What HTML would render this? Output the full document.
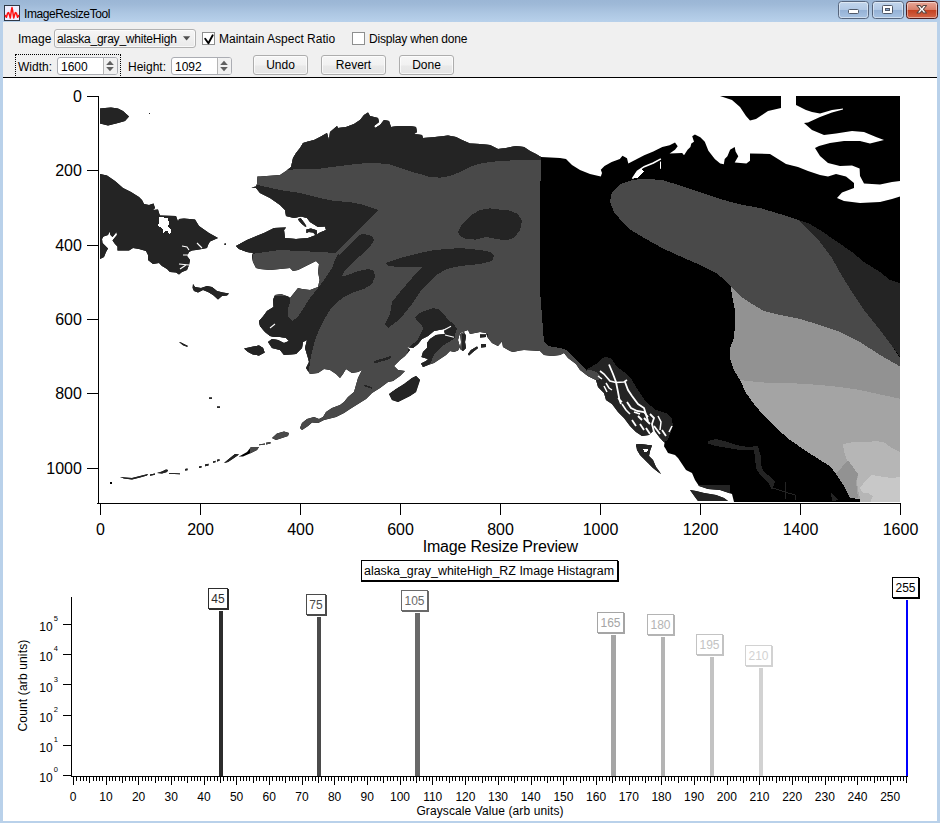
<!DOCTYPE html>
<html>
<head>
<meta charset="utf-8">
<title>ImageResizeTool</title>
<style>
html,body{margin:0;padding:0;}
body{width:940px;height:823px;overflow:hidden;position:relative;background:#b9d1ea;font-family:"Liberation Sans",sans-serif;}
.abs{position:absolute;}
#titlebar{left:0;top:0;width:940px;height:22px;background:linear-gradient(#9bb6d5 0px,#9eb9d7 4px,#abc5e1 12px,#b8d1eb 22px);}
#frame{left:0;top:22px;width:940px;height:801px;background:#b9d1ea;}
#client{left:3px;top:22px;width:934px;height:799px;background:#fff;}
#ctrlbar{left:3px;top:22px;width:934px;height:55px;background:#f0f0f0;}
#ctrlline{left:3px;top:77px;width:934px;height:1px;background:#000;}
.ui{font-family:"Liberation Sans",sans-serif;font-size:12px;color:#000;white-space:nowrap;line-height:14px;}
.btn{border:1px solid #adadad;border-radius:3px;background:linear-gradient(#f6f6f6,#f1f1f1 50%,#e9e9e9 55%,#e5e5e5);box-shadow:inset 0 0 0 1px rgba(255,255,255,0.7);box-sizing:border-box;text-align:center;}
.field{border:1px solid #abadb3;border-radius:3px;background:#fff;box-sizing:border-box;}
svg{position:absolute;left:0;top:0;}
svg text{font-family:"Liberation Sans",sans-serif;}
</style>
</head>
<body>
<div id="titlebar" class="abs"></div>
<div id="frame" class="abs"></div>
<div id="client" class="abs"></div>
<div id="ctrlbar" class="abs"></div>
<div id="ctrlline" class="abs"></div>

<!-- title -->
<div class="abs ui" id="title" style="left:24px;top:7px;letter-spacing:-0.4px;">ImageResizeTool</div>

<!-- controls row 1 -->
<div class="abs ui" id="lblImage" style="left:18px;top:32px;">Image</div>
<div class="abs btn" id="dropdown" style="left:54px;top:29px;width:142px;height:19px;background:linear-gradient(#f6f6f6,#f0f0f0 50%,#e9e9e9);border-color:#b2b2b2;"></div>
<div class="abs ui" id="ddtext" style="left:57px;top:32px;letter-spacing:-0.21px;">alaska_gray_whiteHigh</div>
<div class="abs field" id="cb1" style="left:202px;top:32px;width:13px;height:13px;border-radius:0;border-color:#8e8f8f;"></div>
<div class="abs ui" id="lblMaintain" style="left:219px;top:32px;">Maintain Aspect Ratio</div>
<div class="abs field" id="cb2" style="left:352px;top:32px;width:13px;height:13px;border-radius:0;border-color:#8e8f8f;"></div>
<div class="abs ui" id="lblDisplay" style="left:369px;top:32px;letter-spacing:-0.18px;">Display when done</div>

<!-- controls row 2 -->
<div class="abs" id="focusrect" style="left:15px;top:54px;width:106px;height:24px;border:1px dotted #000;border-bottom:none;box-sizing:border-box;"></div>
<div class="abs ui" id="lblWidth" style="left:18px;top:60px;">Width:</div>
<div class="abs field" id="wfield" style="left:57px;top:57px;width:61px;height:18px;"></div>
<div class="abs ui" id="wval" style="left:61px;top:60px;">1600</div>
<div class="abs ui" id="lblHeight" style="left:128px;top:60px;">Height:</div>
<div class="abs field" id="hfield" style="left:171px;top:57px;width:61px;height:18px;"></div>
<div class="abs ui" id="hval" style="left:175px;top:60px;">1092</div>
<div class="abs btn ui" id="bUndo" style="left:253px;top:55px;width:55px;height:20px;line-height:19px;">Undo</div>
<div class="abs btn ui" id="bRevert" style="left:321px;top:55px;width:65px;height:20px;line-height:19px;">Revert</div>
<div class="abs btn ui" id="bDone" style="left:399px;top:55px;width:55px;height:20px;line-height:19px;">Done</div>

<svg id="main" width="940" height="823" viewBox="0 0 940 823">
<defs><clipPath id="land"><path d="M100 108.4L105 108L111 107.4L118 108.4L123 111L129 116.6L125 121L118 123L108 125.6L100 123.6Z M100 174L107 175.6L115 181L123 188L131 192L139 197L142 200L144 204L149 205L153.5 203.5L155 208L153 210L158 209.5L159 213L160 215.5L176 216L178 221.5L179 219L184 218.5L195 219.6L199 226L209 233L218 238L210 241.5L208 245L207 248L202 249L196 250L192 250.5L189 252L187 256L190 260L189 265L187 270L182 272L179 274.5L176 272.5L170 272L167 269L162 266L159 263L153 264L148 260L148 255L146 251L139 249L133 248L129 250.5L117.5 250.5L117.5 246.5L115 244L112.5 240.5L114.5 238L117 235L116.5 232L112.5 237L110.5 235L109.5 231.5L108 235L103.5 236.5L102 239L102.5 243L105 245.5L108 248.5L106 252L104 257L100 259Z M193 284L195 287L201 288L207 286L212 287L217 291L223 292.4L229 293.6L227 295.6L222 296L218 299.6L213 295L208 292L203 290L198 292.4L194 291L192.6 288Z M244 348.4L251 347L259 345.4L263 348L264.6 352.4L259 355.6L253 354.4L248 352Z M179 342L181 342.4L188 346L187 346.8L183 345.2Z M251.5 187.6L256 186.4L257 184L257.4 176.4L260 176.4L280 175L286 171L291 167L293 158L296 153L300 148L303 143L308 141.6L314 140L320 137L327 133L329 140L330 132L337 126L338 128L346 127L354 124L360 120L364 115L368 112.4L370 116L378 118L379 122L374 126L375 128L380 125L384 120L389 121L391 127L398 126L410 126L416 127L417 132L414 134L422 135L423 138L430 137.6L440 136.4L448 135.6L456 137L462 140L470 143.6L480 144L490 145L498 149L506 148L516 146L524 147L530 151L536 154L541 157L560 158L566 159L572 165L580 170L590 174L600.8 176.4L602 173L600.8 169.7L604.5 166.1L611.7 162L619.8 158.9L622.5 155.8L627 158.3L628.3 163.4L637 158.9L644.2 155.3L653.3 151.6L662.3 147.1L669.6 145.3L675 142.6L677.7 146.2L675 149.8L669.6 153.5L682.2 153.1L684 155.3L687.6 149.8L690.4 147.1L691.3 143.5L694 141.7L692.2 136.3L694.9 134.5L700.3 137.2L704.8 141.7L708.4 150.7L714.8 158.9L720.2 163.4L723.8 164.3L724.7 158.9L727.4 156.2L730.1 149.8L734.7 147.1L735.6 151.6L738.3 156.2L734.7 162.5L746.4 163.4L750 160.7L750 153.5L770 154L778 159L786 164L798 167L808 171L820 175L828 176.4L836 174L846 176.4L854 183L854 188L842 192.4L837 198L844 201L860 203L880 202L892 199L900 196.4L900 502L734 502L732 494L720 490L708 489L699 486L695 480L692 473L686 470L682 464L678 458L675 455L668 453L664 446L666 438L670 434L666 444L660 438L654 430L649 435L642 436L636 432L630 426L624 418L618 412L612 404L606 400L604 393L598 387L596 380L588 376L580 370L576 364L568 358L564 353L560 355L552 356L544 355L540 351L532 350.6L524 350L520 350.5L513 352L510 351L503 347L502 341.5L498 346L492 343L488 338L486 333L480 332L470 334L468 330L460 333L458 340L460 347L458 350.5L454 352L450 351L446 355L440 359L434 363L428 365L423 367L421 363.5L426 361L431 356.5L428 359L421.5 357L423 352L427 348L427 343L430 339L436 335L445 334L444 330L450 326.5L444 329L434 331L428 336L422 339L418 344L413 348L407 347L410 350L405 356L400 360L394 366L398 370L405 371L400 376L393 381L388 382L380 388L372 393L366 399L358 404L350 409L344 413L336 417L328 419L324 420L318 423L312 422.4L308 426L302 430L300 428L302 423L307 419L314 417L319 419L323 417L326 412L332 408L340 405L344 402L348 397L354 392L356 385L358 378L362 370L358 372L352 373L346 369L343 374L340 378L336 374L330 370L324 369L318 373L310 374L306 368L309 362L308 358L305 348L307 340L303 342L302 348L296 354L284 355L280 350L272 348L268 342L272 339L278 340L284 343L289 341L286 338L280 337L274 337L270 336L265 332L260 326L259 321L263 316.5L267 311L273.5 307L273 300L275 295L281 294L288 296.5L290 298L298 288L302 289L310 290L318 287L319.6 280L318 272L319 264L316 261L308 265L298 270L293 271L290 268L280 269L270 270L260 269L256 268L253 262L252 256L253 253L247 252L239 249L236 246L247 240L259 235L264 233L274 228L286 227.6L284 230L285 238L296 239L308 238L316 235L320 232.4L326 230L325 226.4L318 227L310 222L307 218L301 216.4L294 218L286 216L285 210L280 205L270 198L260 193L256 188Z M389 394L396 389L404 384L412 378L416 376L420 380L418 386L416 392L410 396L404 399L398 402L392 400Z M272 438L277 433.6L284 431.6L289 433L288 436L282 438L276 440Z M636 444.4L640 444L652 445.5L650 451L649 456L653 460L656 467L659 471L661 474L658 472L653 468L648 463L643 458L640 455L637 450Z M690 490L696 491L704 493L716 495L724 498L728 501L698 501L695 497Z M720 96L732 100L740 107L746 116L750 120.4L756 119L762 115L768 111L781 108L781 96Z M796 96L900 96L900 181L892 182L880 184.4L864 183.6L860 176L859.6 168.4L852 165.6L840 166L828 163L820 156L815 148L819 146L830 143L844 141L860 141L870 143.6L878 141.6L884 140L876 137L864 132L852 131L836 133.6L824 135L812 130L804 123L808 122.6L820 117L832 112.6L843 109.6L843 108.6L832 110L820 113.6L812 112L806 110L800 107L796 105Z M298 218.9L300.8 218.3L304.2 222.8L306.4 226.2L305.3 226.8L301.9 224L299.1 221.1Z M306.4 229.6L310.9 228.5L316.6 230.2L317.1 233L316 235.8L313.2 232.4L308.7 231.9L306.4 233Z M209 397.5L212 397.5L212 398.8L209 398.8Z M217 406.5L220 406.5L220 407.8L217 407.8Z M149 113L150 113L150 114L149 114Z M224.5 243.5L226 243.5L226 245L224.5 245Z M460 334L464 332L466 336L465 342L466 348L463 351L460 349L461 342Z M468 354L471 350L477 346.5L478 348L473 352L469 355.5Z M481 344L486 344L486 347L481 347.5Z M480 334.5L486 334.5L486 337L480 337.5Z M185 469L187.5 468.6L187.5 470.2L185 470.6Z M199 466.4L201.5 466L201.5 467.6L199 468Z M205 464.6L208.5 463.8L208.5 465.4L205 466.2Z M213 461.4L215.5 460.8L215.5 462.2L213 462.8Z M217 459.8L219.5 459.2L219.5 460.8L217 461.4Z M266 442.8L270.5 442L270.5 443.6L266 444.4Z M110 482L112 482L112 484L110 484Z M150 474.5L155 473.5L155 474.8L150 475.8Z M120 477L125 477.4L132 478L140 476L148 474L147 475.5L140 477.5L132 479.4L124 478.6Z M157 473L162 471.6L166 469.6L168 470L167 472L162 473.4Z M169 473L180 473.4L180 474.2L169 473.8Z M224 463L230 458L235 454L239 454.4L234 458L228 462Z M239 456.4L247 452L251 447L259 447L257 450L251 453L243 456.4Z M259 444.4L265 443.6L265 444.6L259 445.2Z" clip-rule="nonzero"/></clipPath>
<clipPath id="imgbox"><rect x="100" y="96" width="800" height="406"/></clipPath></defs>
<g id="map" clip-path="url(#imgbox)" shape-rendering="crispEdges">
<g clip-path="url(#land)">
<path fill="#000000" d="M90 90L910 90L910 510L90 510Z"/>
<path fill="#494949" d="M250 90L541 90L541 157L539.5 230L540 290L543 330L544 342L548 346L560 348L566 350L572 356L580 364L586 370L592 374L596 380L560 420L420 480L250 480Z"/>
<path fill="#242424" d="M90 90L250 90L250 300L268 340L268 360L240 360L240 480L90 480Z"/>
<path fill="#242424" d="M283 172L286 170L300 169L320 168.6L340 166L360 163.6L374 163L388 164L400 168L416 173L420 174L430 177L440 177.6L450 176L460 172L470 167L480 163.6L490 162L500 161L520 160L541 159.6L541 100L283 100Z"/>
<path fill="#242424" d="M230 184L256 184L260 185.6L280 190L300 193L320 198L334 201L350 202L364 205L378 210L360 228L346 242L335 253L320 252L300 251L280 250L258 253L253 254L253 270L230 270Z"/>
<path fill="#242424" d="M362 234L366 234.4L372 236L374 240L370 247L360 256L350 265L344 272L342 276.4L348 275L358 271L368 269L374 271L375 277L372 284L364 289L354 292L344 297L336 303L330 310L324 320L319 330L315 340L312 352L310 362L309 370L305 380L255 380L255 296L290 296L290 303L288 309L288 317L292 321L297 318L303 309L310 298L318 288L324 280L332 268L335 260L338 254L340 255L350 244L358 236Z"/>
<path fill="#242424" d="M385 263L400 258L420 253L434 250L448 249L460 248L480 250L490 252L494 256L492 261L480 264L460 266L447 269L436 275L428 283L420 292L412 304L404 314L396 322L388 328L385 324L390 314L392 302L400 292L412 278L422 267L412 267L400 267L388 266Z"/>
<path fill="#242424" d="M458 232L462 224L470 216L480 210L490 208.4L500 209.6L510 210.6L518 214L522 221L520 230L514 238L506 240.4L496 239L486 237L476 239.6L466 239L460 236Z"/>
<path fill="#242424" d="M415 317L420 313L427 310L433 308L439 309.5L444 314L448 320L454 324L457 329L455 334L454.5 338.5L444 345L436 352L433 357L431 362L426 367L420 368L415 366L405 360L409 347L414 343L418 339L420 335L423 329L422 325L417 321Z"/>
<path fill="#242424" d="M462 334.3L488 334.3L488 356L462 356Z"/>
<path fill="#242424" d="M389 394L396 389L404 384L412 378L416 376L420 380L418 386L416 392L410 396L404 399L398 402L392 400Z"/>
<path fill="#242424" d="M586 370L596 364L602 358L606 357L612 359L616 366L624 372L632 380L638 390L646 402L656 410L666 413L672 419L673 426L670 434L668 440L640 450L600 420L580 385Z"/>
<path fill="#242424" d="M630 440L665 440L665 480L630 480Z"/>
<path fill="#242424" d="M685 485L730 485L730 502L685 502Z"/>
<path fill="#494949" d="M584 371L590 370L596 372L600 376L601 379L596 380L590 378L584 374Z"/>
<path fill="#494949" d="M610 202L612 192L620 184L634 179.6L650 179L664 180.4L680 185.6L700 192L720 199L740 204.4L760 208L780 214L798 220L808 230L820 242L832 258L842 276L852 292L864 310L880 330L892 346L900 358L900 367L880 355L860 342L840 332L820 325L800 319L780 315L764 311L752 304L740 296L731 287L726 281L716 273L700 265L684 258L664 249L646 239L631 230L624 224L614 212Z"/>
<path fill="#242424" d="M798 219.6L810 224L820 230L836 241L852 252L864 262L880 272L890 280L901 283.6L901 358L892 346L880 330L864 310L852 292L842 276L832 258L820 242L808 230Z"/>
<path fill="#929292" d="M731 287L740 296L752 304L764 311L780 315L800 319L820 325L840 332L860 342L880 355L901 367L901 399L880 394.4L860 390L840 387L820 385L800 383.6L780 383L760 382.4L740 380L734 370L730 358L730 348L734 338L735 324L735 310L732 296Z"/>
<path fill="#a4a4a4" d="M740 380L760 382.4L780 383L800 383.6L820 385L840 387L860 390L880 394.4L901 399L901 503L861 503L860 499L850 498L844 486L836 474L830 466L820 460L806 451L790 440L776 428L764 416L754 404L746 393Z"/>
<path fill="#b6b6b6" d="M843 444L852 442.4L864 442.4L876 441L884 442.4L892 448L901 452.4L901 503L860 503L860 498L858 490L857 482L858 474L852 466L847 460L844 452Z"/>
<path fill="#929292" d="M836 474L848 460L858 474L856 482L858 498L850 498L844 486Z"/>
<path fill="#c8c8c8" d="M860 488L866 480L872 475L880 476.4L892 478L901 477L901 503L870 503L873 496L868 493L862 492.4Z"/>
<path fill="#242424" d="M708 441L716 439L724 441L736 445L748 447L758 446L759.5 452L761 457L760.5 464L764 472L772 478L775 482L773 488L772 490L768 482L760 475L756 468L755 458L754 450L740 450L728 448L716 446L708 443.5Z"/>
<path fill="#242424" d="M831 493L838 500L832 501.6Z"/>
<path fill="none" stroke="#242424" stroke-width="1" d="M773 488L785 492L795 495M785 482V499M795 495V500"/>
<path fill="none" stroke="#242424" stroke-width="2.4" d="M374.5 362.5L380 360.5L386 359L391 357"/>
<path fill="none" stroke="#242424" stroke-width="1.6" d="M364 385.5L372 388"/>
</g>
<path fill="none" stroke="#fff" stroke-width="1.1" d="M270 328L275 324" shape-rendering="auto"/>
<path fill="none" stroke="#fff" stroke-width="1.1" d="M197 243L202 248M182 246L187 247L189 250M183 255H188M179 264L189 265M180 269L186 265" shape-rendering="auto"/>
<path fill="none" stroke="#fff" stroke-width="1.1" d="M445 335L454 337.2" shape-rendering="auto"/>
<path fill="none" stroke="#fff" stroke-width="1.1" d="M444 330L451 326.3" shape-rendering="auto"/>
<path fill="none" stroke="#fff" stroke-width="1.6" d="M632.5 178.8L637.4 171.2L644.2 166.7L653.3 163L660.9 158.9" shape-rendering="auto"/>
<path fill="none" stroke="#fff" stroke-width="1" d="M660.5 161.6V168.8" shape-rendering="auto"/>
<path fill="none" stroke="#fff" stroke-width="1.8" d="M609 364.5L613 374L616 382L618 392L619.5 400L621 404" shape-rendering="auto"/>
<path fill="none" stroke="#fff" stroke-width="1.7" d="M600 371L604 374L610 381L616 382.5L624 382L627 380" shape-rendering="auto"/>
<path fill="none" stroke="#fff" stroke-width="1.8" d="M625 382L628 390L632 396L638 404L644 408L648 421" shape-rendering="auto"/>
<path fill="none" stroke="#fff" stroke-width="1.8" d="M627 402L631 408L637 411L644 412L648 417" shape-rendering="auto"/>
<path fill="none" stroke="#fff" stroke-width="1.8" d="M650 414L654 418L652 424L654 432" shape-rendering="auto"/>
<path fill="none" stroke="#fff" stroke-width="1.5" d="M658 416L661 422L660 430" shape-rendering="auto"/>
<path fill="none" stroke="#fff" stroke-width="1.5" d="M672 426L669 432" shape-rendering="auto"/>
<path fill="none" stroke="#fff" stroke-width="1.5" d="M606 383L609 388L612 390M604 386L607 392M598 376L602 379" shape-rendering="auto"/>
<path fill="none" stroke="#fff" stroke-width="1.8" d="M632 420L636 426M640 424L644 430M646 428L650 434M638 416L642 420M634 412L640 414M644 418L650 424M654 426L660 434M662 430L666 436" shape-rendering="auto"/>
<path fill="none" stroke="#fff" stroke-width="1.6" d="M622 404L626 410L630 414M618 398L622 402" shape-rendering="auto"/>
<path fill="#fff" d="M643 449L648 449.5L647 452L644 451.5Z"/>
<path fill="#fff" d="M633 178L636 172L641 169L644 171L640 175L637 178.4Z"/>
<path fill="#fff" d="M160 216.5L168 218.5L169 224L168 227L171 229.5L171.5 232L169 234L168 231L165 231L163 234L163 229L159 226.5L157 225L159.5 222.5L159 218Z"/>
</g>
<g id="topaxes" shape-rendering="crispEdges" stroke="#000" stroke-width="1" fill="none">
<path d="M98.5 96V504"/>
<path d="M97 503.5H901"/>
<path d="M87 96.5H99"/>
<path d="M87 170.5H99"/>
<path d="M87 245.5H99"/>
<path d="M87 319.5H99"/>
<path d="M87 393.5H99"/>
<path d="M87 468.5H99"/>
<path d="M100.5 504V515"/>
<path d="M200.5 504V515"/>
<path d="M300.5 504V515"/>
<path d="M400.5 504V515"/>
<path d="M500.5 504V515"/>
<path d="M600.5 504V515"/>
<path d="M700.5 504V515"/>
<path d="M800.5 504V515"/>
<path d="M900.5 504V515"/>
</g>
<g id="toplabels" font-size="16" fill="#000">
<text x="81.9" y="101.8" text-anchor="end">0</text>
<text x="81.9" y="175.8" text-anchor="end">200</text>
<text x="81.9" y="250.8" text-anchor="end">400</text>
<text x="81.9" y="324.8" text-anchor="end">600</text>
<text x="81.9" y="398.8" text-anchor="end">800</text>
<text x="81.9" y="473.8" text-anchor="end">1000</text>
<text x="100.5" y="535" text-anchor="middle">0</text>
<text x="200.5" y="535" text-anchor="middle">200</text>
<text x="300.5" y="535" text-anchor="middle">400</text>
<text x="400.5" y="535" text-anchor="middle">600</text>
<text x="500.5" y="535" text-anchor="middle">800</text>
<text x="600.5" y="535" text-anchor="middle">1000</text>
<text x="700.5" y="535" text-anchor="middle">1200</text>
<text x="800.5" y="535" text-anchor="middle">1400</text>
<text x="900.5" y="535" text-anchor="middle">1600</text>
<text x="500.3" y="552" text-anchor="middle" letter-spacing="-0.2">Image Resize Preview</text>
</g>
<g id="histaxes" shape-rendering="crispEdges" stroke="#000" stroke-width="1" fill="none">
<path d="M71.5 597V777"/>
<path d="M71 776.5H908"/>
<path d="M63 775.5H72"/>
<path d="M63 745.5H72"/>
<path d="M63 715.5H72"/>
<path d="M63 684.5H72"/>
<path d="M63 654.5H72"/>
<path d="M63 624.5H72"/>
<path d="M73.5 777v8M76.5 777v4M80.5 777v4M83.5 777v4M86.5 777v4M89.5 777v6M93.5 777v4M96.5 777v4M99.5 777v4M102.5 777v4M106.5 777v8M109.5 777v4M112.5 777v4M115.5 777v4M119.5 777v4M122.5 777v6M125.5 777v4M129.5 777v4M132.5 777v4M135.5 777v4M138.5 777v8M142.5 777v4M145.5 777v4M148.5 777v4M151.5 777v4M155.5 777v6M158.5 777v4M161.5 777v4M165.5 777v4M168.5 777v4M171.5 777v8M174.5 777v4M178.5 777v4M181.5 777v4M184.5 777v4M187.5 777v6M191.5 777v4M194.5 777v4M197.5 777v4M200.5 777v4M204.5 777v8M207.5 777v4M210.5 777v4M214.5 777v4M217.5 777v4M220.5 777v6M223.5 777v4M227.5 777v4M230.5 777v4M233.5 777v4M236.5 777v8M240.5 777v4M243.5 777v4M246.5 777v4M249.5 777v4M253.5 777v6M256.5 777v4M259.5 777v4M263.5 777v4M266.5 777v4M269.5 777v8M272.5 777v4M276.5 777v4M279.5 777v4M282.5 777v4M285.5 777v6M289.5 777v4M292.5 777v4M295.5 777v4M298.5 777v4M302.5 777v8M305.5 777v4M308.5 777v4M312.5 777v4M315.5 777v4M318.5 777v6M321.5 777v4M325.5 777v4M328.5 777v4M331.5 777v4M334.5 777v8M338.5 777v4M341.5 777v4M344.5 777v4M348.5 777v4M351.5 777v6M354.5 777v4M357.5 777v4M361.5 777v4M364.5 777v4M367.5 777v8M370.5 777v4M374.5 777v4M377.5 777v4M380.5 777v4M383.5 777v6M387.5 777v4M390.5 777v4M393.5 777v4M397.5 777v4M400.5 777v8M403.5 777v4M406.5 777v4M410.5 777v4M413.5 777v4M416.5 777v6M419.5 777v4M423.5 777v4M426.5 777v4M429.5 777v4M432.5 777v8M436.5 777v4M439.5 777v4M442.5 777v4M446.5 777v4M449.5 777v6M452.5 777v4M455.5 777v4M459.5 777v4M462.5 777v4M465.5 777v8M468.5 777v4M472.5 777v4M475.5 777v4M478.5 777v4M482.5 777v6M485.5 777v4M488.5 777v4M491.5 777v4M495.5 777v4M498.5 777v8M501.5 777v4M504.5 777v4M508.5 777v4M511.5 777v4M514.5 777v6M517.5 777v4M521.5 777v4M524.5 777v4M527.5 777v4M531.5 777v8M534.5 777v4M537.5 777v4M540.5 777v4M544.5 777v4M547.5 777v6M550.5 777v4M553.5 777v4M557.5 777v4M560.5 777v4M563.5 777v8M566.5 777v4M570.5 777v4M573.5 777v4M576.5 777v4M580.5 777v6M583.5 777v4M586.5 777v4M589.5 777v4M593.5 777v4M596.5 777v8M599.5 777v4M602.5 777v4M606.5 777v4M609.5 777v4M612.5 777v6M615.5 777v4M619.5 777v4M622.5 777v4M625.5 777v4M629.5 777v8M632.5 777v4M635.5 777v4M638.5 777v4M642.5 777v4M645.5 777v6M648.5 777v4M651.5 777v4M655.5 777v4M658.5 777v4M661.5 777v8M665.5 777v4M668.5 777v4M671.5 777v4M674.5 777v4M678.5 777v6M681.5 777v4M684.5 777v4M687.5 777v4M691.5 777v4M694.5 777v8M697.5 777v4M700.5 777v4M704.5 777v4M707.5 777v4M710.5 777v6M714.5 777v4M717.5 777v4M720.5 777v4M723.5 777v4M727.5 777v8M730.5 777v4M733.5 777v4M736.5 777v4M740.5 777v4M743.5 777v6M746.5 777v4M749.5 777v4M753.5 777v4M756.5 777v4M759.5 777v8M763.5 777v4M766.5 777v4M769.5 777v4M772.5 777v4M776.5 777v6M779.5 777v4M782.5 777v4M785.5 777v4M789.5 777v4M792.5 777v8M795.5 777v4M798.5 777v4M802.5 777v4M805.5 777v4M808.5 777v6M812.5 777v4M815.5 777v4M818.5 777v4M821.5 777v4M825.5 777v8M828.5 777v4M831.5 777v4M834.5 777v4M838.5 777v4M841.5 777v6M844.5 777v4M848.5 777v4M851.5 777v4M854.5 777v4M857.5 777v8M861.5 777v4M864.5 777v4M867.5 777v4M870.5 777v4M874.5 777v6M877.5 777v4M880.5 777v4M883.5 777v4M887.5 777v4M890.5 777v8M893.5 777v4M897.5 777v4M900.5 777v4M903.5 777v4M906.5 777v6"/>
</g>
<g id="histlabels" font-size="12" fill="#000">
<text x="39.3" y="782.2">10<tspan font-size="7.5" dy="-10" dx="1.2">0</tspan></text>
<text x="39.3" y="752.0">10<tspan font-size="7.5" dy="-10" dx="1.2">1</tspan></text>
<text x="39.3" y="721.8">10<tspan font-size="7.5" dy="-10" dx="1.2">2</tspan></text>
<text x="39.3" y="691.6">10<tspan font-size="7.5" dy="-10" dx="1.2">3</tspan></text>
<text x="39.3" y="661.4">10<tspan font-size="7.5" dy="-10" dx="1.2">4</tspan></text>
<text x="39.3" y="631.2">10<tspan font-size="7.5" dy="-10" dx="1.2">5</tspan></text>
<text x="73.2" y="801" text-anchor="middle">0</text>
<text x="105.9" y="801" text-anchor="middle">10</text>
<text x="138.6" y="801" text-anchor="middle">20</text>
<text x="171.2" y="801" text-anchor="middle">30</text>
<text x="203.9" y="801" text-anchor="middle">40</text>
<text x="236.6" y="801" text-anchor="middle">50</text>
<text x="269.3" y="801" text-anchor="middle">60</text>
<text x="302.0" y="801" text-anchor="middle">70</text>
<text x="334.6" y="801" text-anchor="middle">80</text>
<text x="367.3" y="801" text-anchor="middle">90</text>
<text x="400.0" y="801" text-anchor="middle">100</text>
<text x="432.7" y="801" text-anchor="middle">110</text>
<text x="465.4" y="801" text-anchor="middle">120</text>
<text x="498.0" y="801" text-anchor="middle">130</text>
<text x="530.7" y="801" text-anchor="middle">140</text>
<text x="563.4" y="801" text-anchor="middle">150</text>
<text x="596.1" y="801" text-anchor="middle">160</text>
<text x="628.8" y="801" text-anchor="middle">170</text>
<text x="661.4" y="801" text-anchor="middle">180</text>
<text x="694.1" y="801" text-anchor="middle">190</text>
<text x="726.8" y="801" text-anchor="middle">200</text>
<text x="759.5" y="801" text-anchor="middle">210</text>
<text x="792.2" y="801" text-anchor="middle">220</text>
<text x="824.8" y="801" text-anchor="middle">230</text>
<text x="857.5" y="801" text-anchor="middle">240</text>
<text x="890.2" y="801" text-anchor="middle">250</text>
<text x="490" y="815" text-anchor="middle" letter-spacing="0.1">Grayscale Value (arb units)</text>
<text transform="translate(27 685.5) rotate(-90)" text-anchor="middle" letter-spacing="0.15">Count (arb units)</text>
</g>
<g id="histtitle">
<rect x="362" y="561" width="257" height="21" fill="#000" shape-rendering="crispEdges"/>
<rect x="361" y="581" width="2" height="1" fill="#000" shape-rendering="crispEdges"/>
<rect x="361.5" y="560.5" width="256" height="20" fill="#fff" stroke="#000" shape-rendering="crispEdges"/>
<text x="364" y="575" font-size="12" textLength="250" lengthAdjust="spacingAndGlyphs">alaska_gray_whiteHigh_RZ Image Histagram</text>
</g>
<g id="bars">
<rect x="219" y="611" width="4" height="165" fill="#2d2d2d" shape-rendering="crispEdges"/>
<rect x="209" y="589" width="20" height="21" fill="#2d2d2d" shape-rendering="crispEdges"/>
<rect x="208.5" y="588.5" width="19" height="20" fill="#fff" stroke="#2d2d2d" shape-rendering="crispEdges"/>
<text x="218.0" y="603" font-size="12" fill="#2d2d2d" text-anchor="middle">45</text>
<rect x="317" y="617" width="4" height="159" fill="#4b4b4b" shape-rendering="crispEdges"/>
<rect x="307" y="595" width="20" height="21" fill="#4b4b4b" shape-rendering="crispEdges"/>
<rect x="306.5" y="594.5" width="19" height="20" fill="#fff" stroke="#4b4b4b" shape-rendering="crispEdges"/>
<text x="316.0" y="609" font-size="12" fill="#4b4b4b" text-anchor="middle">75</text>
<rect x="415" y="613" width="5" height="163" fill="#696969" shape-rendering="crispEdges"/>
<rect x="402" y="591" width="27" height="21" fill="#696969" shape-rendering="crispEdges"/>
<rect x="401.5" y="590.5" width="26" height="20" fill="#fff" stroke="#696969" shape-rendering="crispEdges"/>
<text x="414.5" y="605" font-size="12" fill="#696969" text-anchor="middle">105</text>
<rect x="611" y="635" width="5" height="141" fill="#a5a5a5" shape-rendering="crispEdges"/>
<rect x="598" y="613" width="27" height="21" fill="#a5a5a5" shape-rendering="crispEdges"/>
<rect x="597.5" y="612.5" width="26" height="20" fill="#fff" stroke="#a5a5a5" shape-rendering="crispEdges"/>
<text x="610.5" y="627" font-size="12" fill="#a5a5a5" text-anchor="middle">165</text>
<rect x="661" y="637" width="4" height="139" fill="#b4b4b4" shape-rendering="crispEdges"/>
<rect x="648" y="615" width="27" height="21" fill="#b4b4b4" shape-rendering="crispEdges"/>
<rect x="647.5" y="614.5" width="26" height="20" fill="#fff" stroke="#b4b4b4" shape-rendering="crispEdges"/>
<text x="660.5" y="629" font-size="12" fill="#b4b4b4" text-anchor="middle">180</text>
<rect x="710" y="657" width="4" height="119" fill="#c3c3c3" shape-rendering="crispEdges"/>
<rect x="697" y="635" width="27" height="21" fill="#c3c3c3" shape-rendering="crispEdges"/>
<rect x="696.5" y="634.5" width="26" height="20" fill="#fff" stroke="#c3c3c3" shape-rendering="crispEdges"/>
<text x="709.5" y="649" font-size="12" fill="#c3c3c3" text-anchor="middle">195</text>
<rect x="759" y="668" width="4" height="108" fill="#d2d2d2" shape-rendering="crispEdges"/>
<rect x="746" y="646" width="27" height="21" fill="#d2d2d2" shape-rendering="crispEdges"/>
<rect x="745.5" y="645.5" width="26" height="20" fill="#fff" stroke="#d2d2d2" shape-rendering="crispEdges"/>
<text x="758.5" y="660" font-size="12" fill="#d2d2d2" text-anchor="middle">210</text>
<rect x="906" y="600" width="2" height="176" fill="#0000ff" shape-rendering="crispEdges"/>
<rect x="893" y="578" width="27" height="21" fill="#000000" shape-rendering="crispEdges"/>
<rect x="892.5" y="577.5" width="26" height="20" fill="#fff" stroke="#000000" shape-rendering="crispEdges"/>
<text x="905.5" y="592" font-size="12" fill="#000000" text-anchor="middle">255</text>
</g>
<defs>
<linearGradient id="gb" x1="0" y1="0" x2="0" y2="1"><stop offset="0" stop-color="#c3d6ec"/><stop offset="0.47" stop-color="#b2c9e5"/><stop offset="0.5" stop-color="#94b1d5"/><stop offset="1" stop-color="#a9c4e3"/></linearGradient>
<linearGradient id="gr" x1="0" y1="0" x2="0" y2="1"><stop offset="0" stop-color="#e9ab9c"/><stop offset="0.47" stop-color="#d9806b"/><stop offset="0.5" stop-color="#c4401f"/><stop offset="1" stop-color="#d4684b"/></linearGradient>
</defs>
<rect x="838.5" y="1.5" width="30" height="17" rx="3" ry="3" fill="url(#gb)" stroke="#56657c"/>
<rect x="839.5" y="2.5" width="28" height="15" rx="2" ry="2" fill="none" stroke="#fff" stroke-opacity="0.45"/>
<rect x="872.5" y="1.5" width="31" height="17" rx="3" ry="3" fill="url(#gb)" stroke="#56657c"/>
<rect x="873.5" y="2.5" width="29" height="15" rx="2" ry="2" fill="none" stroke="#fff" stroke-opacity="0.45"/>
<rect x="906.5" y="1.5" width="31" height="17" rx="3" ry="3" fill="url(#gr)" stroke="#4d1a1a"/>
<rect x="907.5" y="2.5" width="29" height="15" rx="2" ry="2" fill="none" stroke="#fff" stroke-opacity="0.45"/>
<rect x="848.5" y="9.5" width="10" height="4" rx="1" fill="#fff" stroke="#4f5868"/>
<rect x="882.5" y="5.5" width="10" height="8" rx="1" fill="#fff" stroke="#4f5868"/>
<rect x="885.5" y="8.5" width="4" height="2" fill="#88a6cc" stroke="#4f5868"/>
<path d="M916.95 5.5L920.15 5.5L921.75 7.6L923.35 5.5L926.55 5.5L923.45 9.25L926.55 13L923.35 13L921.75 10.9L920.15 13L916.95 13L920.05 9.25Z" fill="#fff" stroke="#5a4540" stroke-width="1.1" stroke-linejoin="round"/>
<rect x="4.5" y="5.5" width="15" height="15" fill="#e4e4ff" stroke="#2e3846"/>
<path d="M5 6h14v14H5z" fill="#eeeeff"/>
<path d="M5.3 15.5L6.4 17.3L7.6 13.2L8.6 12.6L9.6 15.5L10.3 18L11.3 11L12 7.6L12.7 11L13.7 18L14.4 15.5L15.4 12.6L16.4 13.2L17.6 17.3L18.7 15.5" fill="none" stroke="#ff1010" stroke-width="1.5" stroke-linejoin="round" stroke-linecap="round"/>
<path d="M183 36.3h7.2l-3.6 4.1z" fill="#505050"/>
<path d="M205.2 38.8L208.4 43.2L212.7 35.3" fill="none" stroke="#000" stroke-width="1.9" stroke-linecap="round" stroke-linejoin="round"/>
<rect x="104" y="58" width="13" height="16" rx="1.5" fill="#f1f1f1"/>
<path d="M103.5 58V74" stroke="#b5b5b5" fill="none" shape-rendering="crispEdges"/>
<path d="M106.2 65h7.6l-3.8-4.2z" fill="#606060"/>
<path d="M106.2 67h7.6l-3.8 4.2z" fill="#606060"/>
<rect x="218" y="58" width="13" height="16" rx="1.5" fill="#f1f1f1"/>
<path d="M217.5 58V74" stroke="#b5b5b5" fill="none" shape-rendering="crispEdges"/>
<path d="M220.2 65h7.6l-3.8-4.2z" fill="#606060"/>
<path d="M220.2 67h7.6l-3.8 4.2z" fill="#606060"/>
</svg>
</body>
</html>
